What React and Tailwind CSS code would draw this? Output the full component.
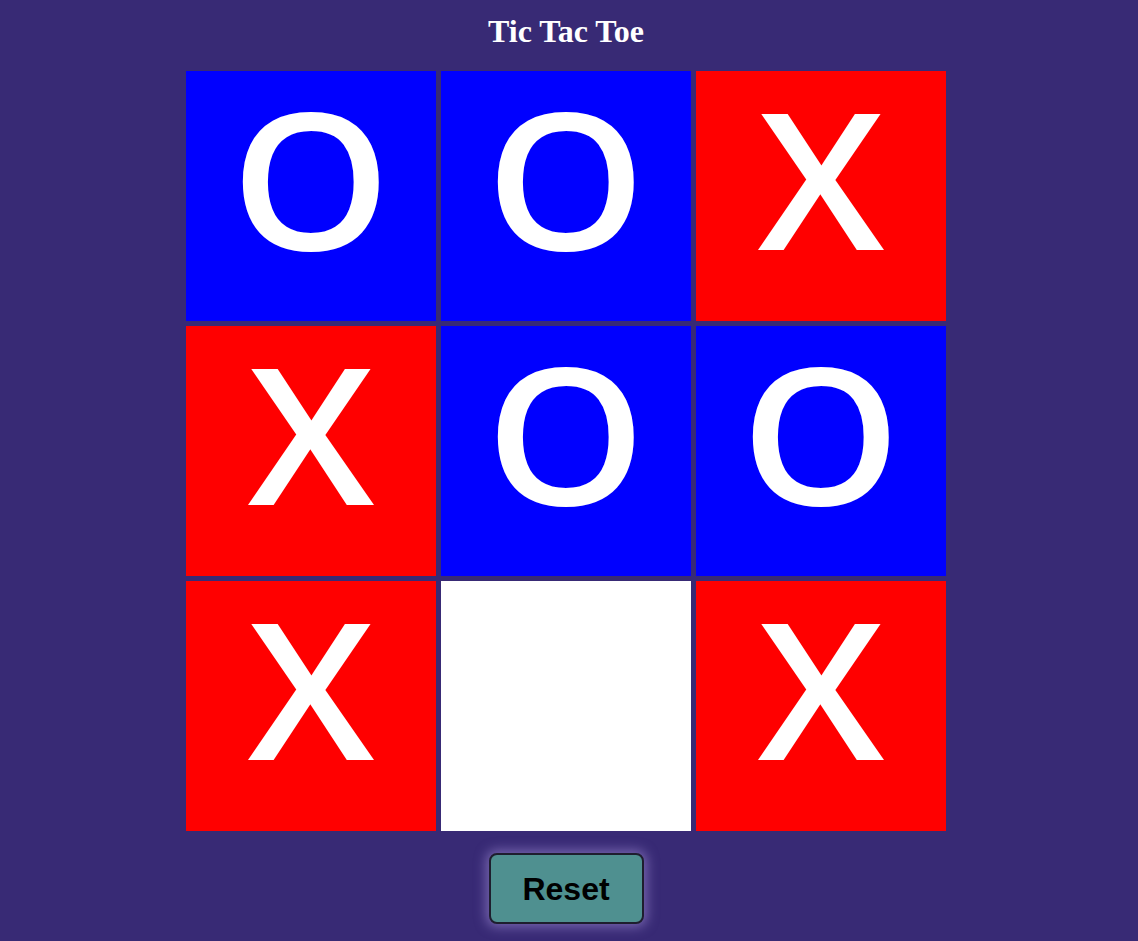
import React from "react";

const board = ["O", "O", "X", "X", "O", "O", "X", "", "X"];

export default function App() {
  return (
    <div className="min-h-[941px] w-full bg-[#382a75] overflow-hidden">
      <div className="w-[1132px] flex flex-col items-center">
        <h1 className="mt-[13px] text-[32px] leading-[36px] font-bold text-white [font-family:'Liberation_Serif',serif]">
          Tic Tac Toe
        </h1>
        <div className="mt-[22px] grid grid-cols-[250px_250px_250px] gap-[5px]">
          {board.map((v, i) => (
            <div
              key={i}
              className={
                "w-[250px] h-[250px] flex items-center justify-center pb-[38px] text-white text-[190px] font-semibold leading-none [font-family:'Open_Sans',sans-serif] " +
                (v === "O" ? "bg-[#0000ff]" : v === "X" ? "bg-[#ff0000]" : "bg-white")
              }
            >
              <span className="inline-block scale-x-[1.07]">{v}</span>
            </div>
          ))}
        </div>
        <button className="mt-[22px] w-[155px] h-[71px] rounded-[8px] border-2 border-[#1e1e2e] bg-[#4f9090] text-black font-bold text-[32px] [font-family:'Liberation_Sans',sans-serif] shadow-[0_0_12px_3px_rgba(170,150,220,0.55)]">
          Reset
        </button>
      </div>
    </div>
  );
}
